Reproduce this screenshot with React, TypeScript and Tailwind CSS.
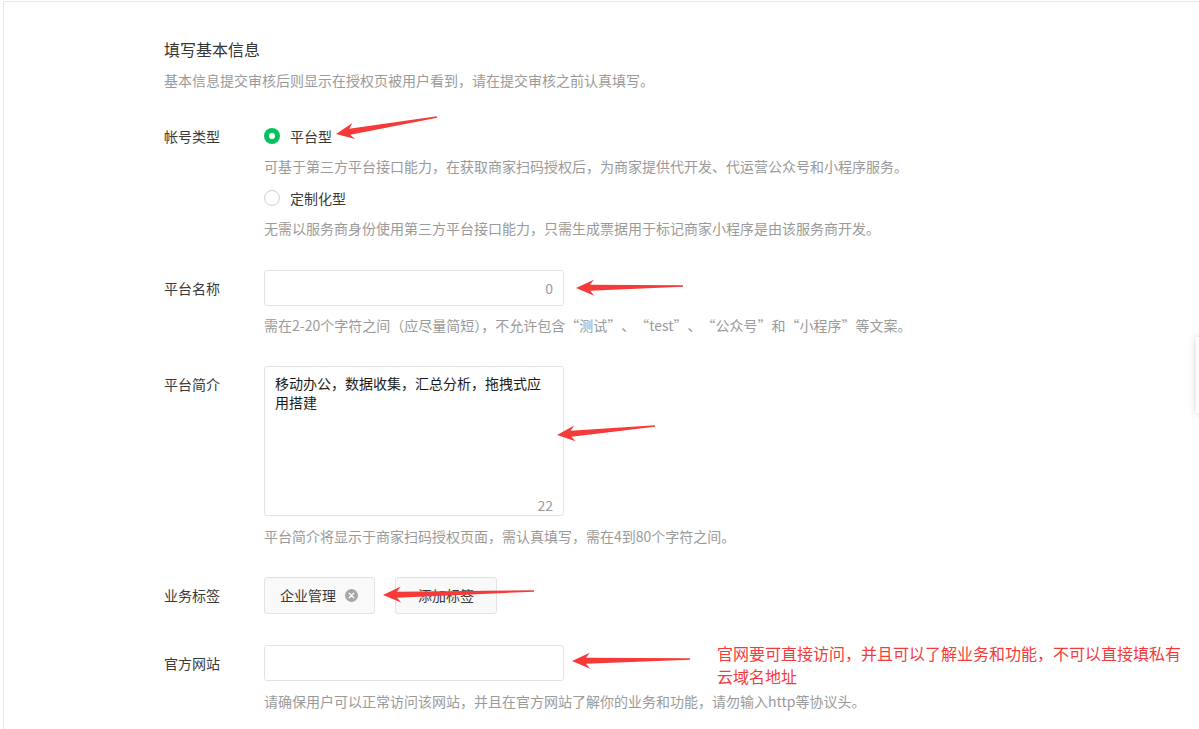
import React from "react";

type Pt = [number, number];

// red callout arrows drawn over the form, tail -> tip
const arrows: { tail: Pt; tip: Pt }[] = [
    { tail: [437, 117], tip: [336, 134] },
    { tail: [683, 286], tip: [576, 288] },
    { tail: [655, 426], tip: [557, 435] },
    { tail: [534, 591], tip: [383, 595] },
    { tail: [690, 659], tip: [572, 661] },
];

function arrowPoints(tail: Pt, tip: Pt) {
    const dx = tail[0] - tip[0];
    const dy = tail[1] - tip[1];
    const len = Math.hypot(dx, dy);
    const d: Pt = [dx / len, dy / len];
    const n: Pt = [-d[1], d[0]];
    const at = (base: Pt, along: number, side: number): Pt => [
        base[0] + d[0] * along + n[0] * side,
        base[1] + d[1] * along + n[1] * side,
    ];
    const pts: Pt[] = [
        tip,
        at(tip, 18, 8),
        at(tip, 14, 3),
        at(tail, 0, 0.7),
        at(tail, 0, -0.7),
        at(tip, 14, -3),
        at(tip, 18, -8),
    ];
    return pts.map((p) => p.join(",")).join(" ");
}

function Radio({ checked }: { checked?: boolean }) {
    if (checked) {
        return (
            <span className="w-4 h-4 rounded-full bg-[#07c160] flex items-center justify-center">
                <span className="w-[6px] h-[6px] rounded-full bg-white" />
            </span>
        );
    }
    return <span className="w-4 h-4 rounded-full border border-[#d2d2d2] bg-white" />;
}

// full-width curly quotes, so the quoted words keep their CJK spacing
function Quoted({ children }: { children: React.ReactNode }) {
    return (
        <>
            <span className="inline-block w-[14px] text-right">“</span>
            {children}
            <span className="inline-block w-[14px] text-left">”</span>
        </>
    );
}

function Row({ label, labelClass, children }: { label: string; labelClass: string; children: React.ReactNode }) {
    return (
        <div className="flex">
            <div className={"w-[100px] shrink-0 text-[14px] text-[#3a3a3a] " + labelClass}>{label}</div>
            <div className="flex flex-col">{children}</div>
        </div>
    );
}

function Tip({ children, className = "" }: { children: React.ReactNode; className?: string }) {
    return <p className={"text-[14px] leading-5 text-[#9a9a9a] whitespace-nowrap " + className}>{children}</p>;
}

export default function App() {
    return (
        <div className="relative w-full h-[729px] overflow-hidden bg-white font-['Noto_Sans_CJK_SC','Microsoft_YaHei',sans-serif]">
            <div className="ml-[3px] mt-[1px] h-[760px] border-l border-t border-[#e6e6e6] pl-[160px] pt-[35px]">
                <h2 className="text-[16px] leading-6 text-[#353535] font-normal">填写基本信息</h2>
                <Tip className="mt-[9px]">基本信息提交审核后则显示在授权页被用户看到，请在提交审核之前认真填写。</Tip>

                {/* 帐号类型 */}
                <div className="mt-[36px]">
                    <Row label="帐号类型" labelClass="leading-5">
                        <label className="flex items-center gap-[10px] h-5 text-[14px] text-[#3a3a3a]">
                            <Radio checked /> 平台型
                        </label>
                        <Tip className="mt-[10px]">可基于第三方平台接口能力，在获取商家扫码授权后，为商家提供代开发、代运营公众号和小程序服务。</Tip>
                        <label className="mt-[12px] flex items-center gap-[10px] h-5 text-[14px] text-[#3a3a3a]">
                            <Radio /> 定制化型
                        </label>
                        <Tip className="mt-[10px]">无需以服务商身份使用第三方平台接口能力，只需生成票据用于标记商家小程序是由该服务商开发。</Tip>
                    </Row>
                </div>

                {/* 平台名称 */}
                <div className="mt-[32px]">
                    <Row label="平台名称" labelClass="h-[36px] flex items-center">
                        <div className="w-[300px] h-[36px] border border-[#e3e3e3] rounded-[3px] flex items-center justify-end pr-[10px]">
                            <span className="text-[14px] text-[#9a9a9a]">0</span>
                        </div>
                        <Tip className="mt-[9px]">
                            需在2-20个字符之间（应尽量简短），不允许包含<Quoted>测试</Quoted>、<Quoted>test</Quoted>、
                            <Quoted>公众号</Quoted>和<Quoted>小程序</Quoted>等文案。
                        </Tip>
                    </Row>
                </div>

                {/* 平台简介 */}
                <div className="mt-[31px]">
                    <Row label="平台简介" labelClass="pt-[8px] leading-5">
                        <div className="relative w-[300px] h-[150px] border border-[#e3e3e3] rounded-[3px] pl-[10px] pt-[7px] text-[14px] leading-[19px] text-[#1a1a1a] whitespace-pre-line">
                            {"移动办公，数据收集，汇总分析，拖拽式应\n用搭建"}
                            <span className="absolute right-[10px] bottom-0 leading-5 text-[#9a9a9a]">22</span>
                        </div>
                        <Tip className="mt-[10px]">平台简介将显示于商家扫码授权页面，需认真填写，需在4到80个字符之间。</Tip>
                    </Row>
                </div>

                {/* 业务标签 */}
                <div className="mt-[31px]">
                    <Row label="业务标签" labelClass="h-[37px] flex items-center">
                        <div className="flex gap-[20px]">
                            <div className="h-[37px] w-[111px] border border-[#e3e3e3] rounded-[3px] bg-[#f9f9f9] flex items-center pl-[15px] gap-[9px] text-[14px] text-[#3a3a3a]">
                                企业管理
                                <svg width="13" height="13" viewBox="0 0 13 13">
                                    <circle cx="6.5" cy="6.5" r="6.5" fill="#a6a6a6" />
                                    <path d="M4.2 4.2 L8.8 8.8 M8.8 4.2 L4.2 8.8" stroke="#fff" strokeWidth="1.3" strokeLinecap="round" />
                                </svg>
                            </div>
                            <div className="h-[37px] w-[102px] border border-[#e3e3e3] rounded-[3px] bg-[#f9f9f9] flex items-center justify-center text-[14px] text-[#3a3a3a]">
                                添加标签
                            </div>
                        </div>
                    </Row>
                </div>

                {/* 官方网站 */}
                <div className="mt-[31px]">
                    <Row label="官方网站" labelClass="h-[36px] flex items-center">
                        <div className="w-[300px] h-[36px] border border-[#e3e3e3] rounded-[3px]" />
                        <Tip className="mt-[10px]">请确保用户可以正常访问该网站，并且在官方网站了解你的业务和功能，请勿输入http等协议头。</Tip>
                    </Row>
                </div>
            </div>

            {/* annotations */}
            <svg className="absolute inset-0 pointer-events-none" width="1199" height="729">
                {arrows.map((a, i) => (
                    <polygon key={i} points={arrowPoints(a.tail, a.tip)} fill="#f63a3a" />
                ))}
            </svg>
            <p className="absolute left-[717px] top-[642px] w-[470px] text-[16px] leading-[23px] text-[#f53a3a]">
                官网要可直接访问，并且可以了解业务和功能，不可以直接填私有云域名地址
            </p>

            {/* floating side tab peeking in from the right edge */}
            <div className="absolute left-[1196px] top-[337px] w-[20px] h-[76px] bg-white shadow-[0_0_8px_rgba(0,0,0,0.18)]" />
        </div>
    );
}
